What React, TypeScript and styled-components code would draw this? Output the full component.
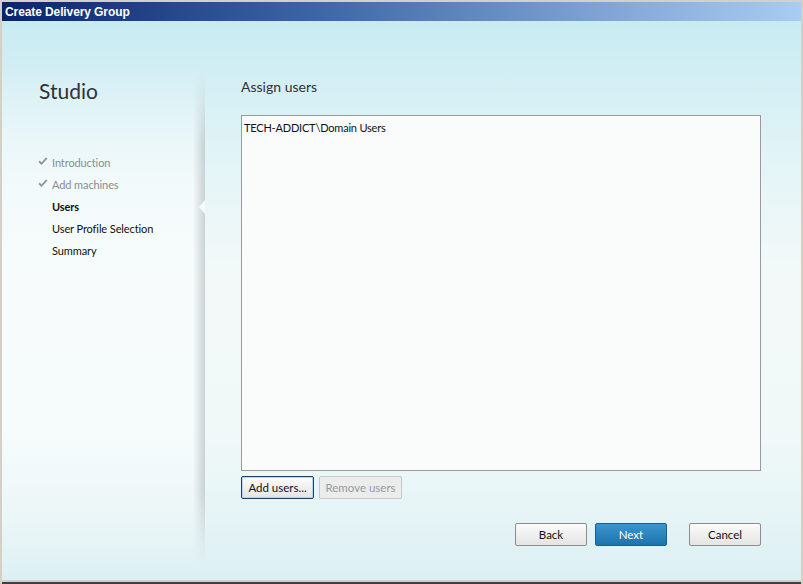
import React from "react";
import styled, { createGlobalStyle } from "styled-components";

const GlobalStyle = createGlobalStyle`
    html, body {
        margin: 0;
        padding: 0;
        background: #d4d0c8;
    }
    * {
        box-sizing: border-box;
    }
`;

const Window = styled.div`
    width: 803px;
    height: 584px;
    display: flex;
    flex-direction: column;
    border: 2px solid #d4d0c8;
    border-bottom: none;
    box-shadow: inset 0 -2px 0 #404040;
    padding-bottom: 4px;
    background: #d4d0c8;
    font-family: Lato, "Liberation Sans", sans-serif;
`;

const TitleBar = styled.div`
    height: 19px;
    display: flex;
    align-items: center;
    padding-left: 3px;
    background: linear-gradient(to right, #0a246a 0%, #3d68a4 40%, #7fa4d4 75%, #a8cdf2 100%);
    color: #fff;
    font-family: "Liberation Sans", sans-serif;
    font-weight: bold;
    font-size: 12px;
    letter-spacing: -0.1px;
`;

const Body = styled.div`
    flex: 1;
    display: flex;
    background: linear-gradient(to bottom, #c8ebf2 0%, #e3f4f7 25%, #f3f9f8 45%, #f0f8f8 75%, #dcf0f3 100%);
`;

const Sidebar = styled.div`
    position: relative;
    width: 203px;
    display: flex;
    flex-direction: column;
    padding: 57px 0 0 36px;
    background: linear-gradient(to bottom, rgba(255, 255, 255, 0) 8%, rgba(248, 252, 252, 0.7) 30%, rgba(248, 252, 252, 0.8) 70%, rgba(255, 255, 255, 0) 100%);

    &::after {
        content: "";
        position: absolute;
        right: 0;
        top: 50px;
        bottom: 15px;
        width: 12px;
        background: linear-gradient(to right, rgba(160, 170, 175, 0), rgba(160, 170, 175, 0.5));
        -webkit-mask-image: linear-gradient(to bottom, transparent 0%, #000 15%, #000 85%, transparent 100%);
        mask-image: linear-gradient(to bottom, transparent 0%, #000 15%, #000 85%, transparent 100%);
    }
`;

const Notch = styled.div`
    position: absolute;
    right: 0;
    top: 179px;
    width: 0;
    height: 0;
    z-index: 1;
    border-top: 7px solid transparent;
    border-bottom: 7px solid transparent;
    border-right: 6px solid #f6fbfa;
`;

const Brand = styled.div`
    font-size: 21px;
    color: #2f3236;
    margin-bottom: 48px;
    padding-left: 1px;
`;

const StepList = styled.div`
    display: flex;
    flex-direction: column;
`;

const Step = styled.div<{ $state: "done" | "current" | "todo" }>`
    height: 22px;
    display: flex;
    align-items: center;
    font-size: 11px;
    letter-spacing: -0.1px;
    padding-left: 14px;
    position: relative;
    color: ${({ $state }) => ($state === "done" ? "#8a8d90" : "#111")};
    font-weight: ${({ $state }) => ($state === "current" ? "bold" : "normal")};

    svg {
        position: absolute;
        left: 0;
        top: 6px;
    }
`;

const Main = styled.div`
    flex: 1;
    display: flex;
    flex-direction: column;
    padding: 57px 40px 34px 36px;
`;

const Heading = styled.div`
    font-size: 14px;
    color: #2f3236;
    height: 20px;
    margin-bottom: 17px;
`;

const ListBox = styled.div`
    height: 356px;
    border: 1px solid #9a9a9a;
    background: #f9fcfb;
    padding: 5px 2px;
    font-size: 11px;
    letter-spacing: -0.2px;
    color: #111;
`;

const ButtonRow = styled.div`
    display: flex;
    gap: 5px;
    margin-top: 5px;
`;

const Button = styled.button<{ $variant?: "primary" | "focus" | "disabled" | "default"; $width: number; $gapLeft?: number }>`
    width: ${({ $width }) => $width}px;
    height: 23px;
    margin-left: ${({ $gapLeft }) => $gapLeft ?? 0}px;
    font-family: inherit;
    font-size: 11.5px;
    border-radius: 2px;
    padding: 0;
    cursor: default;
    color: ${({ $variant }) =>
        $variant === "primary" ? "#fff" : $variant === "disabled" ? "#9a9a9a" : "#111"};
    border: 1px solid
        ${({ $variant }) =>
            $variant === "primary" ? "#1b5f8f" : $variant === "focus" ? "#1d3f66" : $variant === "disabled" ? "#c8c8c8" : "#8d8d8d"};
    background: ${({ $variant }) =>
        $variant === "primary"
            ? "linear-gradient(to bottom, #3a95cf, #1d73ad)"
            : $variant === "disabled"
            ? "#ebecec"
            : "linear-gradient(to bottom, #fbfbfb, #e4e4e4)"};
    box-shadow: ${({ $variant }) => ($variant === "focus" ? "inset 0 0 0 1px #b9d6ef" : "none")};
`;

const Spacer = styled.div`
    flex: 1;
`;

const NavRow = styled.div`
    display: flex;
    gap: 8px;
    justify-content: flex-end;
`;

const Check = () => (
    <svg width="10" height="9" viewBox="0 0 10 9">
        <path d="M0.5 5 L3.5 8 L9.5 1.5 L8 0.5 L3.5 5.5 L1.8 3.6 Z" fill="#8f9396" />
    </svg>
);

const steps: { label: string; state: "done" | "current" | "todo" }[] = [
    { label: "Introduction", state: "done" },
    { label: "Add machines", state: "done" },
    { label: "Users", state: "current" },
    { label: "User Profile Selection", state: "todo" },
    { label: "Summary", state: "todo" },
];

export default function App() {
    return (
        <>
            <GlobalStyle />
            <Window>
                <TitleBar>Create Delivery Group</TitleBar>
                <Body>
                    <Sidebar>
                        <Brand>Studio</Brand>
                        <StepList>
                            {steps.map((s) => (
                                <Step key={s.label} $state={s.state}>
                                    {s.state === "done" && <Check />}
                                    {s.label}
                                </Step>
                            ))}
                        </StepList>
                        <Notch />
                    </Sidebar>
                    <Main>
                        <Heading>Assign users</Heading>
                        <ListBox>TECH-ADDICT\Domain Users</ListBox>
                        <ButtonRow>
                            <Button $variant="focus" $width={73}>Add users...</Button>
                            <Button $variant="disabled" $width={83}>Remove users</Button>
                        </ButtonRow>
                        <Spacer />
                        <NavRow>
                            <Button $width={72}>Back</Button>
                            <Button $variant="primary" $width={72}>Next</Button>
                            <Button $width={72} $gapLeft={14}>Cancel</Button>
                        </NavRow>
                    </Main>
                </Body>
            </Window>
        </>
    );
}
